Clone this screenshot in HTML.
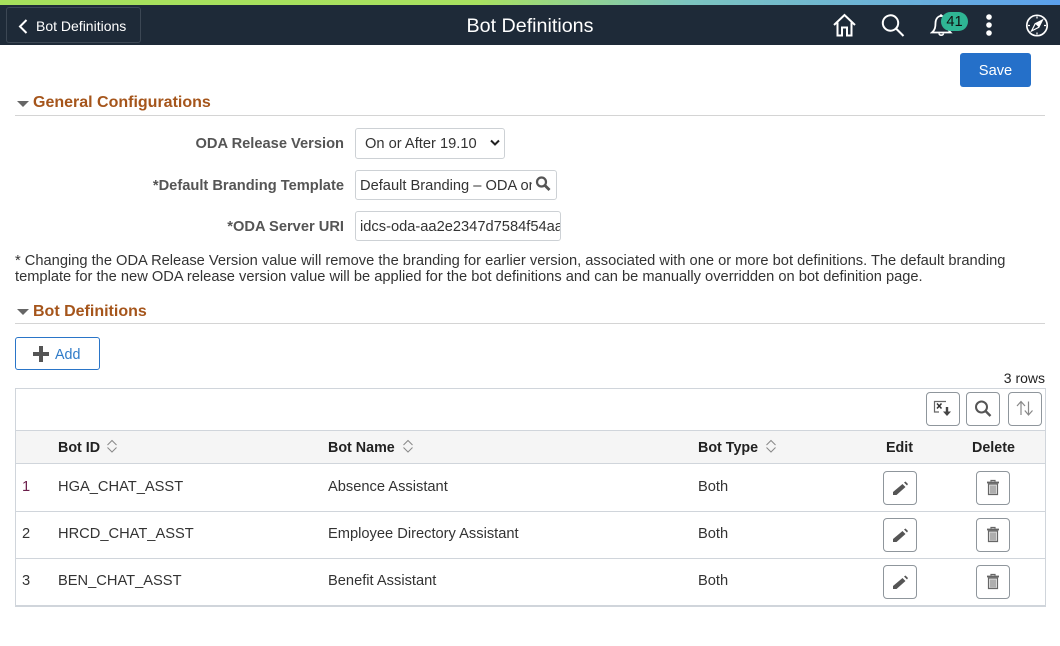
<!DOCTYPE html>
<html lang="en">
<head>
<meta charset="utf-8">
<title>Bot Definitions</title>
<style>
html,body{margin:0;padding:0;background:#fff}
body{position:relative;width:1060px;height:646px;overflow:hidden;font-family:"Liberation Sans",Arial,sans-serif;font-size:14.67px;color:#333}
.a{position:absolute;white-space:nowrap}
.bar{left:0;top:0;width:1060px;height:5px;background:linear-gradient(90deg,#a6e05c 0%,#a8e060 45%,#7cc4c0 65%,#5ba0ec 100%)}
.hdr{left:0;top:5px;width:1060px;height:40px;background:#1e2a38}
.back{left:6px;top:7px;width:133px;height:34px;border:1px solid #3c4754;border-radius:3px;color:#fff;font-size:14px;line-height:37px;text-indent:29px}
.title{left:330px;width:400px;top:13px;text-align:center;color:#fff;font-size:19.7px;line-height:26px}
.save{left:960px;top:53px;width:71px;height:34px;background:#2570c9;border-radius:3px;color:#fff;text-align:center;line-height:36px}
.sec{color:#a5551b;font-weight:bold;font-size:16px;line-height:20px;left:33px}
.rule{left:15px;width:1030px;height:1px;background:#d4d4d4}
.tri{left:17px;width:0;height:0;border-left:6.5px solid transparent;border-right:6.5px solid transparent;border-top:6px solid #666}
.lbl{right:716px;font-weight:bold;color:#555;line-height:18px}
.inp{border:1px solid #cdd1d5;border-radius:3px;background:#fff;box-sizing:border-box;overflow:hidden;color:#333;line-height:31px}
.note{left:15px;top:253px;width:1030px;line-height:16px;color:#333;white-space:normal}
.add{left:15px;top:337px;width:83px;height:31px;border:1px solid #2a75c8;border-radius:3px;color:#2f7bc8;font-size:14.3px}
.tbl{left:15px;top:388px;width:1029px;height:216px;border:1px solid #d0d5db;border-bottom-width:2px}
.th{left:16px;top:430px;width:1029px;background:#f5f5f5;border-top:1px solid #d0d5db;border-bottom:1px solid #d0d5db;height:32px}
.ln{left:16px;width:1029px;height:1px;background:#d0d5db}
.h{font-weight:bold;color:#222;top:439px;line-height:18px;font-size:14.3px}
.c{line-height:18px;color:#333}
.btn{border:1px solid #8f969c;border-radius:4px;width:32px;height:32px;background:#fff}
.btn svg{position:absolute;left:0;top:0}
</style>
</head>
<body>
<div class="a bar"></div>
<div class="a hdr"></div>
<div class="a back">Bot Definitions</div>
<svg class="a" style="left:17px;top:18px" width="12" height="17" viewBox="0 0 12 17"><path d="M9.500 2 3 8.500l6.500 6.500" fill="none" stroke="#fff" stroke-width="2"/></svg>
<div class="a title">Bot Definitions</div>

<svg class="a" style="left:832px;top:13px" width="26" height="24" viewBox="0 0 26 24" fill="none" stroke="#fff" stroke-width="2"><path d="M2 12 12.500 2 23 12M5.500 9.500V22.500H10V14.500H15V22.500H19.500V9.500"/></svg>
<svg class="a" style="left:880px;top:13px" width="26" height="24" viewBox="0 0 26 24" fill="none" stroke="#fff" stroke-width="2"><circle cx="10.500" cy="10" r="7.700"/><path d="M16 15.500 23.500 23"/></svg>
<svg class="a" style="left:930px;top:12px" width="24" height="26" viewBox="0 0 24 26" fill="none" stroke="#fff" stroke-width="1.800"><circle cx="11" cy="3.500" r="1.200" fill="#fff" stroke="none"/><path d="M2 20.500C5 18 5.500 15 5.500 11C5.500 7 8 4 11 4C15 4 17 7 17 11C17 15 18 18 20.500 20.500Z"/><path d="M9 21.500C9.500 23.800 13 23.800 13.500 21.500" stroke-width="1.600"/></svg>
<div class="a" style="left:941px;top:12px;width:27px;height:19px;border-radius:10px;background:#2fb594;color:#111;text-align:center;line-height:20px;font-size:14.67px">41</div>
<svg class="a" style="left:982px;top:13px" width="14" height="24" viewBox="0 0 14 24" fill="#fff"><circle cx="7" cy="4" r="2.800"/><circle cx="7" cy="12" r="2.800"/><circle cx="7" cy="20" r="2.800"/></svg>
<svg class="a" style="left:1025px;top:13px" width="24" height="24" viewBox="0 0 24 24"><circle cx="12" cy="12.500" r="10.200" fill="none" stroke="#fff" stroke-width="1.700"/><path d="M12 3.500V5.500M12 19.500V21.500M3 12.500H5M19 12.500H21" stroke="#fff" stroke-width="1.200"/><path d="M17.500 7 13.800 14.300 6.500 18 10.200 10.700Z" fill="none" stroke="#fff" stroke-width="1.200"/><path d="M17.500 7 13.800 14.300 10.200 10.700Z" fill="#fff"/></svg>

<div class="a save">Save</div>

<div class="a tri" style="top:101px"></div>
<div class="a sec" style="top:93px">General Configurations</div>
<div class="a rule" style="top:115px"></div>

<div class="a lbl" style="top:135px">ODA Release Version</div>
<div class="a inp" style="left:355px;top:128px;width:150px;height:31px;padding-left:9px">On or After 19.10</div>
<svg class="a" style="left:490px;top:139px" width="10" height="8" viewBox="0 0 10 8"><path d="M1 1.500 5 5.500 9 1.500" fill="none" stroke="#222" stroke-width="2"/></svg>

<div class="a lbl" style="top:177px">*Default Branding Template</div>
<div class="a inp" style="left:355px;top:170px;width:202px;height:30px;padding-left:4px"><div style="width:172px;overflow:hidden;white-space:nowrap">Default Branding – ODA on or After</div></div>
<svg class="a" style="left:535px;top:176px" width="17" height="16" viewBox="0 0 17 16" fill="none" stroke="#555" stroke-width="2.200"><circle cx="6.500" cy="6" r="4.500"/><path d="M10 9.500 14.500 14" stroke-width="2.800"/></svg>

<div class="a lbl" style="top:218px">*ODA Server URI</div>
<div class="a inp" style="left:355px;top:211px;width:206px;height:30px;padding-left:4px"><div style="width:200px;overflow:hidden;white-space:nowrap">idcs-oda-aa2e2347d7584f54aa6b</div></div>

<div class="a note">* Changing the ODA Release Version value will remove the branding for earlier version, associated with one or more bot definitions. The default branding template for the new ODA release version value will be applied for the bot definitions and can be manually overridden on bot definition page.</div>

<div class="a tri" style="top:309px"></div>
<div class="a sec" style="top:302px">Bot Definitions</div>
<div class="a rule" style="top:323px"></div>

<div class="a add"><span class="a" style="left:39px;top:8px;line-height:18px">Add</span></div>
<svg class="a" style="left:33px;top:346px" width="16" height="16" viewBox="0 0 16 16"><path d="M8 0V16M0 8H16" stroke="#555" stroke-width="4"/></svg>

<div class="a" style="right:15px;top:369px;font-size:14px;line-height:18px;color:#222">3 rows</div>

<div class="a tbl"></div>
<div class="a th"></div>
<div class="a ln" style="top:511px"></div>
<div class="a ln" style="top:558px"></div>

<div class="a btn" style="left:926px;top:392px"><svg width="32" height="32" viewBox="0 0 32 32"><path d="M19 8.500H7.500V19H12" fill="none" stroke="#666" stroke-width="1.200"/><path d="M10 10.500l4.500 5M14.500 10.500l-4.500 5" stroke="#333" stroke-width="1.500"/><path d="M20 14V19" stroke="#444" stroke-width="2.400"/><path d="M16 18.500H24L20 23Z" fill="#444"/></svg></div>
<div class="a btn" style="left:966px;top:392px"><svg width="32" height="32" viewBox="0 0 32 32" fill="none" stroke="#555" stroke-width="2"><circle cx="14.500" cy="14" r="5.500"/><path d="M18.500 18 23.500 23" stroke-width="2.400"/></svg></div>
<div class="a btn" style="left:1008px;top:392px"><svg width="32" height="32" viewBox="0 0 32 32" fill="none" stroke="#888" stroke-width="1.200"><path d="M12 22V9M8 13 12 8.500 16 13M19.500 8.500V21.500M15.800 17.500 19.500 22 23.500 17.500"/></svg></div>

<div class="a h" style="left:58px">Bot ID</div>
<div class="a h" style="left:328px">Bot Name</div>
<div class="a h" style="left:698px">Bot Type</div>
<svg class="a" style="left:106px;top:439px" width="12" height="14" viewBox="0 0 12 14" fill="none" stroke="#888"><path d="M1.500 6 6 1.500 10.500 6M1.500 8.500 6 13 10.500 8.500"/></svg>
<svg class="a" style="left:402px;top:439px" width="12" height="14" viewBox="0 0 12 14" fill="none" stroke="#888"><path d="M1.500 6 6 1.500 10.500 6M1.500 8.500 6 13 10.500 8.500"/></svg>
<svg class="a" style="left:765px;top:439px" width="12" height="14" viewBox="0 0 12 14" fill="none" stroke="#888"><path d="M1.500 6 6 1.500 10.500 6M1.500 8.500 6 13 10.500 8.500"/></svg>
<div class="a h" style="left:886px">Edit</div>
<div class="a h" style="left:972px">Delete</div>

<div class="a c" style="left:22px;top:478px;color:#6b1e4a">1</div>
<div class="a c" style="left:58px;top:478px">HGA_CHAT_ASST</div>
<div class="a c" style="left:328px;top:478px">Absence Assistant</div>
<div class="a c" style="left:698px;top:478px">Both</div>

<div class="a c" style="left:22px;top:525px">2</div>
<div class="a c" style="left:58px;top:525px">HRCD_CHAT_ASST</div>
<div class="a c" style="left:328px;top:525px">Employee Directory Assistant</div>
<div class="a c" style="left:698px;top:525px">Both</div>

<div class="a c" style="left:22px;top:572px">3</div>
<div class="a c" style="left:58px;top:572px">BEN_CHAT_ASST</div>
<div class="a c" style="left:328px;top:572px">Benefit Assistant</div>
<div class="a c" style="left:698px;top:572px">Both</div>

<div class="a btn" style="left:883px;top:471px"><svg width="32" height="32" viewBox="0 0 32 32" fill="#555"><path d="M9 20 18.500 12 21.500 15 12.500 23H9ZM20 10.500 21.500 9.500 24 12 23 13.500Z"/></svg></div>
<div class="a btn" style="left:883px;top:518px"><svg width="32" height="32" viewBox="0 0 32 32" fill="#555"><path d="M9 20 18.500 12 21.500 15 12.500 23H9ZM20 10.500 21.500 9.500 24 12 23 13.500Z"/></svg></div>
<div class="a btn" style="left:883px;top:565px"><svg width="32" height="32" viewBox="0 0 32 32" fill="#555"><path d="M9 20 18.500 12 21.500 15 12.500 23H9ZM20 10.500 21.500 9.500 24 12 23 13.500Z"/></svg></div>

<div class="a btn" style="left:976px;top:471px"><svg width="32" height="32" viewBox="0 0 32 32"><path d="M10 10.500H22" stroke="#666" stroke-width="1.800"/><path d="M14 9.500V8.500H18V9.500" fill="none" stroke="#666" stroke-width="1.200"/><path d="M11.500 12H20.500V22.500H11.500Z" fill="#e4e4e4" stroke="#666" stroke-width="1.200"/><path d="M14 13.500V21.500M16 13.500V21.500M18 13.500V21.500" stroke="#777" stroke-width="1"/></svg></div>
<div class="a btn" style="left:976px;top:518px"><svg width="32" height="32" viewBox="0 0 32 32"><path d="M10 10.500H22" stroke="#666" stroke-width="1.800"/><path d="M14 9.500V8.500H18V9.500" fill="none" stroke="#666" stroke-width="1.200"/><path d="M11.500 12H20.500V22.500H11.500Z" fill="#e4e4e4" stroke="#666" stroke-width="1.200"/><path d="M14 13.500V21.500M16 13.500V21.500M18 13.500V21.500" stroke="#777" stroke-width="1"/></svg></div>
<div class="a btn" style="left:976px;top:565px"><svg width="32" height="32" viewBox="0 0 32 32"><path d="M10 10.500H22" stroke="#666" stroke-width="1.800"/><path d="M14 9.500V8.500H18V9.500" fill="none" stroke="#666" stroke-width="1.200"/><path d="M11.500 12H20.500V22.500H11.500Z" fill="#e4e4e4" stroke="#666" stroke-width="1.200"/><path d="M14 13.500V21.500M16 13.500V21.500M18 13.500V21.500" stroke="#777" stroke-width="1"/></svg></div>
</body>
</html>
